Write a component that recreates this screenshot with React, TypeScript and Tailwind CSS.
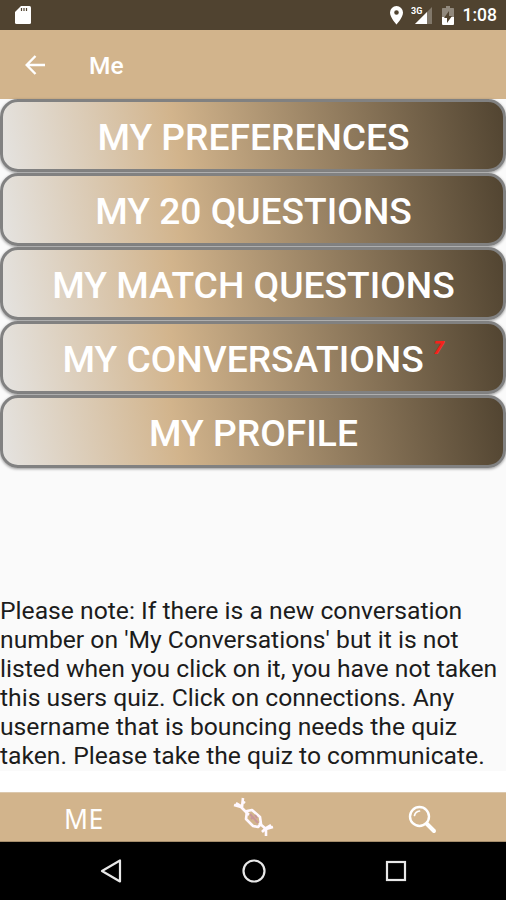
interface MenuItem {
  label: string;
  badge?: string;
}

const menuItems: MenuItem[] = [
  { label: "MY PREFERENCES" },
  { label: "MY 20 QUESTIONS" },
  { label: "MY MATCH QUESTIONS" },
  { label: "MY CONVERSATIONS", badge: "7" },
  { label: "MY PROFILE" },
];

const StatusBar = () => (
  <div className="flex h-[30px] shrink-0 items-center bg-[#504330] pr-[9px] pl-[14px] text-white">
    <svg className="h-5 w-[18px]" viewBox="0 0 18 20" fill="currentColor">
      <path d="M7 1h8.500q1.500 0 1.500 1.500v15q0 1.500-1.500 1.500h-13q-1.500 0-1.500-1.500V7z" />
      <path d="M7.500 3v3M10 3v3M12.500 3v3" stroke="#504330" strokeWidth="1.200" />
    </svg>
    <div className="ml-auto flex items-center">
      <svg className="h-[19px] w-[13px]" viewBox="0 0 13 19" fill="currentColor">
        <path
          fillRule="evenodd"
          d="M6.500 0A6.500 6.500 0 0 0 0 6.500C0 11.500 6.500 18.500 6.500 18.500S13 11.500 13 6.500A6.500 6.500 0 0 0 6.500 0zm0 4.200a2.300 2.300 0 1 1 0 4.600 2.300 2.300 0 0 1 0-4.600z"
        />
      </svg>
      <svg className="ml-2 h-[20px] w-[22px]" viewBox="0 0 22 20">
        <path d="M21 2v17H4z" fill="#81786a" />
        <path d="M16 7v12H4z" fill="currentColor" />
        <text x="0" y="9" fill="currentColor" className="font-['Roboto',sans-serif] text-[9px] font-bold">
          3G
        </text>
      </svg>
      <svg className="ml-[9px] h-[19px] w-[12px]" viewBox="0 0 12 19">
        <path d="M4 0h4v2h3.300q.7 0 .7.700V12H0V2.700Q0 2 .7 2H4z" fill="#91897d" />
        <path d="M0 11h12v7q0 1-1 1H1q-1 0-1-1z" fill="currentColor" />
        <path d="M7 5v5h3l-5 7v-5H2z" fill="#504330" />
      </svg>
      <span className="ml-[9px] pt-[2px] text-[17.500px] leading-none font-medium">1:08</span>
    </div>
  </div>
);

const AppBar = () => (
  <header className="flex h-[69px] shrink-0 items-center bg-[#d2b48c] pl-[25px] text-white">
    <svg
      className="h-[20px] w-[21px]"
      viewBox="0 0 21 20"
      fill="none"
      stroke="currentColor"
      strokeWidth="2.400"
    >
      <path d="M20 10H2M10.500 1L1.700 10l8.800 9" />
    </svg>
    <h1 className="ml-[43px] pt-[3px] text-[24.500px] leading-none font-medium">Me</h1>
  </header>
);

const MenuButton = ({ label, badge }: MenuItem) => (
  <button className="flex h-[73px] w-full items-center justify-center rounded-[18px] border-[3.500px] border-[#818181] bg-linear-[80deg] from-[#e5e4e2] via-[#d2b48c] via-35% to-[#504330] bg-origin-border pt-1 pl-px text-[37.200px] leading-none font-medium text-white shadow-[0_1px_3px_rgba(0,0,0,0.4)]">
    <span>{label}</span>
    {badge && (
      <sup className="top-[-12px] ml-[9px] font-['DejaVu_Sans',sans-serif] text-[17px] font-bold text-[#f5221c] italic">
        {badge}
      </sup>
    )}
  </button>
);

const TabBar = () => (
  <nav className="grid h-[50px] shrink-0 grid-cols-3 items-center border-t border-b border-t-[#dcc8ad] border-b-[#a58d6c] bg-[#d2b48c] text-white">
    <span className="pt-[5px] pr-px text-center font-['Noto_Sans',sans-serif] text-[26.500px] leading-none tracking-[0.500px]">
      ME
    </span>
    <svg
      className="h-[44px] w-[42px] justify-self-center"
      viewBox="0 0 42 44"
      fill="none"
      stroke="#fff8ff"
      strokeWidth="2.600"
      strokeLinejoin="round"
    >
      <path d="M2 10l7 2 8 8M11 3l-1 9M4 8l5 3M10 6l3 2" />
      <path d="M27 28l7 6 7-2M34 34v7M34 33l5-3M33 34l-3 3" />
      <path d="M15 16l5-1 8 7 1 7-3 3-5-1-7-7z" />
      <path d="M18 19l8 9M19 24l2-2M23 20l2 3" stroke="#c9969a" strokeWidth="2" />
    </svg>
    <svg
      className="mt-1 ml-[2px] h-[29px] w-[29px] justify-self-center"
      viewBox="0 0 29 29"
      fill="none"
      stroke="currentColor"
      strokeLinecap="round"
    >
      <circle cx="11.500" cy="11.500" r="9.500" strokeWidth="2.400" />
      <path d="M6.500 10.500q1-4 5-4.500" strokeWidth="1.700" />
      <path d="M19 19l7 7" strokeWidth="4" />
    </svg>
  </nav>
);

const NavigationBar = () => (
  <div className="flex h-[58px] shrink-0 items-center justify-between bg-black pr-[98px] pl-[100px]">
    <svg className="h-6 w-6" viewBox="0 0 24 24" fill="none" stroke="#e8e8e8" strokeWidth="2.200">
      <path d="M20 1.500v21L2 12z" strokeLinejoin="round" />
    </svg>
    <svg className="h-6 w-6" viewBox="0 0 24 24" fill="none" stroke="#e8e8e8" strokeWidth="2.200">
      <circle cx="12" cy="12" r="10.500" />
    </svg>
    <svg className="h-6 w-6" viewBox="0 0 24 24" fill="none" stroke="#e8e8e8" strokeWidth="2.200">
      <rect x="3" y="3" width="18" height="18" />
    </svg>
  </div>
);

const App = () => {
  return (
    <div className="flex h-[900px] w-[506px] flex-col overflow-hidden bg-white font-['Roboto',sans-serif]">
      <StatusBar />
      <AppBar />
      <main className="flex h-[672px] shrink-0 flex-col bg-[#fafafa]">
        <div className="flex flex-col gap-px">
          {menuItems.map((item) => (
            <MenuButton key={item.label} {...item} />
          ))}
        </div>
        <p className="mt-auto pb-px text-[24.700px] leading-[29px] whitespace-nowrap text-[#1c1c1c]">
          Please note: If there is a new conversation
          <br />
          number on 'My Conversations' but it is not
          <br />
          listed when you click on it, you have not taken
          <br />
          this users quiz. Click on connections. Any
          <br />
          username that is bouncing needs the quiz
          <br />
          taken. Please take the quiz to communicate.
        </p>
      </main>
      <div className="mt-auto">
        <TabBar />
        <NavigationBar />
      </div>
    </div>
  );
};

export default App;
